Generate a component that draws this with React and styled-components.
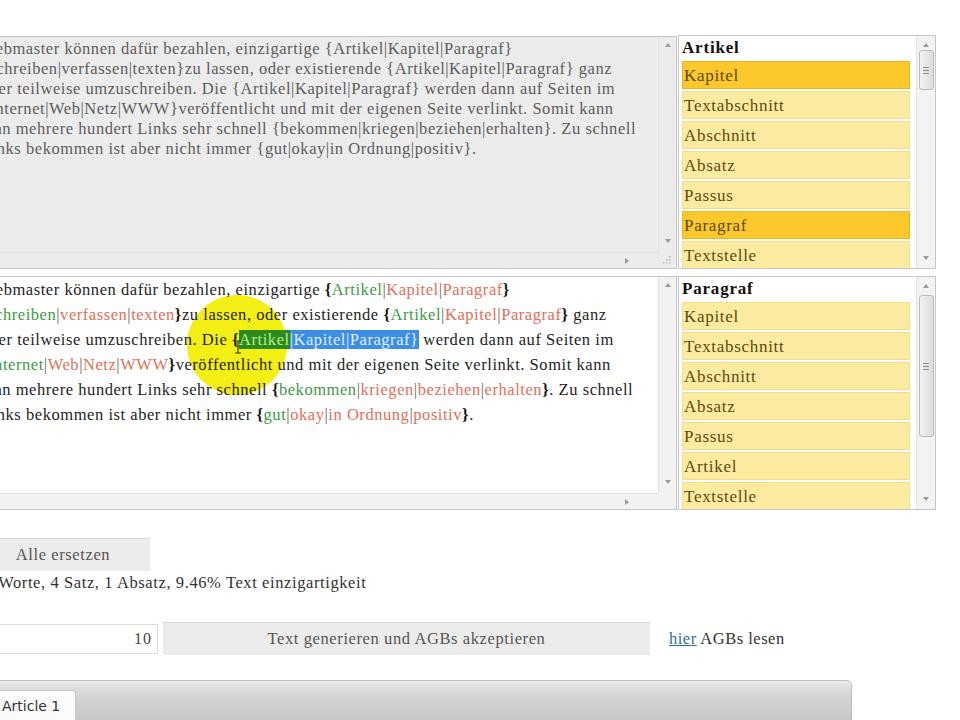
import React from "react"
import styled, { createGlobalStyle } from "styled-components"

const GlobalStyle = createGlobalStyle`
  html, body {
    margin: 0;
    padding: 0;
    background: #fff;
    overflow: hidden;
  }
  body {
    font-family: "Liberation Serif", "DejaVu Serif", serif;
    letter-spacing: 0.55px;
  }
`

const Page = styled.div`
  width: 984px;
  margin-left: -24px;
  padding-top: 36px;
  display: flex;
  flex-direction: column;
`

const Row = styled.div`
  display: flex;
  gap: 1px;
  height: ${p => p.$h}px;
  margin-bottom: ${p => p.$mb || 0}px;
`

const Editor = styled.div`
  width: 701px;
  box-sizing: border-box;
  border: 1px solid #c6c6c6;
  background: ${p => p.$bg};
  display: grid;
  grid-template-columns: 1fr 18px;
  grid-template-rows: 1fr 16px;
  overflow: hidden;
`

const Content = styled.div`
  position: relative;
  overflow: hidden;
  padding: ${p => p.$pt || 0}px 0 0 4px;
  font-size: 16.5px;
  line-height: ${p => p.$lh}px;
  color: ${p => p.$color};
`

const Line = styled.div`
  position: relative;
  z-index: 1;
  white-space: nowrap;
`

const VBar = styled.div`
  display: flex;
  flex-direction: column;
  justify-content: space-between;
  align-items: center;
  padding: 5px 0 8px;
  background: ${p => p.$bg};
  border-left: 1px solid #e2e2e2;
`

const HBar = styled.div`
  display: flex;
  justify-content: flex-end;
  align-items: center;
  padding-right: 26px;
  background: ${p => p.$bg};
  border-top: 1px solid #e2e2e2;
`

const Corner = styled.div`
  background: ${p => p.$bg};
  display: flex;
  align-items: flex-end;
  justify-content: flex-end;
  padding: 0 4px 3px 0;
`

const Arrow = ({ dir }) => {
  const pts = {
    up: "1,5 4,1 7,5",
    down: "1,1 4,5 7,1",
    right: "1,1 5,4 1,7",
  }[dir]
  return (
    <svg width="8" height={dir === "right" ? 8 : 6} viewBox={dir === "right" ? "0 0 8 8" : "0 0 8 6"}>
      <polygon points={pts} fill="#9a9a9a" />
    </svg>
  )
}

const Grip = () => (
  <svg width="10" height="10" viewBox="0 0 10 10">
    {[[8, 2], [8, 5], [5, 5], [8, 8], [5, 8], [2, 8]].map(([x, y], i) => (
      <rect key={i} x={x - 1} y={y - 1} width="1.5" height="1.5" fill="#b8b8b8" />
    ))}
  </svg>
)

const Brace = styled.span`
  color: #151515;
  font-weight: bold;
`

const Opt = styled.span`
  color: ${p => (p.$first ? "#3f9a45" : "#e46f58")};
`

const Pipe = styled.span`
  color: #6a6a6a;
`

const Hi = styled.span`
  background: ${p => (p.$green ? "#2c8a1c" : "#3a8ee4")};
  color: ${p => (p.$green ? "#b6ef8c" : "#e2eeff")};
`

const Circle = styled.div`
  position: absolute;
  left: 210px;
  top: 18px;
  width: 100px;
  height: 100px;
  border-radius: 50%;
  background: #f3ee14;
  z-index: 0;
`

const Cursor = styled.svg`
  position: absolute;
  left: 257px;
  top: 63px;
  z-index: 2;
`

function Spin({ words }) {
  return (
    <>
      <Brace>{"{"}</Brace>
      {words.map((w, i) => (
        <React.Fragment key={i}>
          {i > 0 && <Pipe>|</Pipe>}
          <Opt $first={i === 0}>{w}</Opt>
        </React.Fragment>
      ))}
      <Brace>{"}"}</Brace>
    </>
  )
}

const ListBox = styled.div`
  width: 258px;
  box-sizing: border-box;
  border: 1px solid #c6c6c6;
  background: #fff;
  display: flex;
  overflow: hidden;
  margin-top: ${p => p.$mt || 0}px;
`

const ListBody = styled.div`
  flex: 1;
  padding: 0 6px 0 3px;
  overflow: hidden;
`

const ListHead = styled.div`
  height: 25px;
  line-height: 24px;
  font-size: 17px;
  letter-spacing: 0.8px;
  font-weight: bold;
  color: #111;
  padding-left: 0;
`

const Item = styled.div`
  height: 28px;
  box-sizing: border-box;
  line-height: 27px;
  margin-bottom: 2px;
  padding-left: 1px;
  font-size: 17px;
  letter-spacing: 0.7px;
  color: #5b4a12;
  background: ${p => (p.$sel ? "#fdc82c" : "#fdeb9f")};
  border: 1px solid ${p => (p.$sel ? "#eeb41c" : "#f3dd8c")};
`

const ListScroll = styled.div`
  width: 18px;
  display: flex;
  flex-direction: column;
  align-items: center;
  padding: 6px 0 7px;
  background: #f3f3f3;
  border-left: 1px solid #e4e4e4;
`

const Thumb = styled.div`
  width: 15px;
  box-sizing: border-box;
  height: ${p => p.$h}px;
  margin-top: ${p => p.$top}px;
  border: 1px solid #bcbcbc;
  border-radius: 3px;
  background: linear-gradient(to right, #f2f2f2, #dcdcdc);
  display: flex;
  flex-direction: column;
  justify-content: center;
  align-items: center;
  gap: 2px;
`

const ThumbLine = styled.span`
  width: 6px;
  height: 1px;
  background: #8c8c8c;
`

const Spacer = styled.div`
  flex: 1;
`

function List({ title, items, selected = [], thumbTop, thumbH, mt }) {
  return (
    <ListBox $mt={mt}>
      <ListBody>
        <ListHead>{title}</ListHead>
        {items.map(it => (
          <Item key={it} $sel={selected.includes(it)}>
            {it}
          </Item>
        ))}
      </ListBody>
      <ListScroll>
        <Arrow dir="up" />
        <Thumb $top={thumbTop} $h={thumbH}>
          <ThumbLine />
          <ThumbLine />
          <ThumbLine />
        </Thumb>
        <Spacer />
        <Arrow dir="down" />
      </ListScroll>
    </ListBox>
  )
}

const GrayButton = styled.div`
  width: ${p => p.$w}px;
  height: 33px;
  box-sizing: border-box;
  background: #ececec;
  border-top: 1px solid #d6d6d6;
  color: #555;
  font-size: 16.5px;
  letter-spacing: 0.6px;
  line-height: 31px;
  text-align: center;
  margin-left: ${p => p.$ml || 0}px;
`

const Gap = styled.div`
  height: ${p => p.$h}px;
`

const Stats = styled.div`
  margin-top: 2px;
  padding-left: 0;
  font-size: 16.5px;
  letter-spacing: 0.6px;
  line-height: 20px;
  color: #333;
  white-space: nowrap;
`

const FormRow = styled.div`
  display: flex;
  align-items: center;
  margin-top: 30px;
  height: 31px;
`

const NumInput = styled.div`
  width: 182px;
  height: 30px;
  box-sizing: border-box;
  border: 1px solid #dcdcdc;
  text-align: right;
  padding-right: 5px;
  line-height: 28px;
  font-size: 16px;
  letter-spacing: 1px;
  color: #444;
`

const LinkText = styled.div`
  margin-left: 19px;
  font-size: 16.5px;
  letter-spacing: 0.5px;
  color: #333;
  a {
    color: #2f6ea8;
    text-decoration: underline;
  }
`

const TabBar = styled.div`
  width: 876px;
  height: 60px;
  box-sizing: border-box;
  margin-top: 26px;
  border: 1px solid #bdbdbd;
  border-radius: 0 5px 0 0;
  background: linear-gradient(#eeeeee 0, #e4e4e4 3px, #d8d8d8 12px, #c6c6c6 40px);
  padding-top: 9px;
  display: flex;
`

const Tab = styled.div`
  height: 40px;
  box-sizing: border-box;
  background: #fbfbfb;
  border: 1px solid #c8c8c8;
  border-bottom: none;
  border-radius: 4px 4px 0 0;
  padding: 0 15px 0 24px;
  font-family: "DejaVu Sans", Verdana, sans-serif;
  font-size: 14px;
  letter-spacing: 0;
  line-height: 30px;
  color: #333;
`

const synonymsA = ["Kapitel", "Textabschnitt", "Abschnitt", "Absatz", "Passus", "Paragraf", "Textstelle"]
const synonymsB = ["Kapitel", "Textabschnitt", "Abschnitt", "Absatz", "Passus", "Artikel", "Textstelle"]

export default function App() {
  return (
    <>
      <GlobalStyle />
      <Page>
        <Row $h={233} $mb={7}>
          <Editor $bg="#ececec">
            <Content $lh={20} $pt={2} $color="#5c5c5c">
              <Line>Webmaster können dafür bezahlen, einzigartige {"{Artikel|Kapitel|Paragraf}"}</Line>
              <Line>{"{schreiben|verfassen|texten}"}zu lassen, oder existierende {"{Artikel|Kapitel|Paragraf}"} ganz</Line>
              <Line>oder teilweise umzuschreiben. Die {"{Artikel|Kapitel|Paragraf}"} werden dann auf Seiten im</Line>
              <Line>{"{Internet|Web|Netz|WWW}"}veröffentlicht und mit der eigenen Seite verlinkt. Somit kann</Line>
              <Line>man mehrere hundert Links sehr schnell {"{bekommen|kriegen|beziehen|erhalten}"}. Zu schnell</Line>
              <Line>Links bekommen ist aber nicht immer {"{gut|okay|in Ordnung|positiv}"}.</Line>
            </Content>
            <VBar $bg="#ececec">
              <Arrow dir="up" />
              <Arrow dir="down" />
            </VBar>
            <HBar $bg="#ececec">
              <Arrow dir="right" />
            </HBar>
            <Corner $bg="#ececec">
              <Grip />
            </Corner>
          </Editor>
          <List title="Artikel" items={synonymsA} selected={["Kapitel", "Paragraf"]} thumbTop={2} thumbH={40} mt={-1} />
        </Row>
        <Row $h={234}>
          <Editor $bg="#fff">
            <Content $lh={25} $color="#1e1e1e">
              <Circle />
              <Cursor width="8" height="14" viewBox="0 0 8 14">
                <path d="M1 1h6M4 1v12M1 13h6" stroke="#333" strokeWidth="1.2" fill="none" />
              </Cursor>
              <Line>
                Webmaster können dafür bezahlen, einzigartige <Spin words={["Artikel", "Kapitel", "Paragraf"]} />
              </Line>
              <Line>
                <Spin words={["schreiben", "verfassen", "texten"]} />zu lassen, oder existierende{" "}
                <Spin words={["Artikel", "Kapitel", "Paragraf"]} /> ganz
              </Line>
              <Line>
                oder teilweise umzuschreiben. Die <Brace>{"{"}</Brace>
                <Hi $green>Artikel</Hi>
                <Hi>|Kapitel|Paragraf{"}"}</Hi> werden dann auf Seiten im
              </Line>
              <Line>
                <Spin words={["Internet", "Web", "Netz", "WWW"]} />veröffentlicht und mit der eigenen Seite verlinkt. Somit kann
              </Line>
              <Line>
                man mehrere hundert Links sehr schnell <Spin words={["bekommen", "kriegen", "beziehen", "erhalten"]} />. Zu schnell
              </Line>
              <Line>
                Links bekommen ist aber nicht immer <Spin words={["gut", "okay", "in Ordnung", "positiv"]} />.
              </Line>
            </Content>
            <VBar $bg="#f2f2f2">
              <Arrow dir="up" />
              <Arrow dir="down" />
            </VBar>
            <HBar $bg="#f2f2f2">
              <Arrow dir="right" />
            </HBar>
            <Corner $bg="#f2f2f2" />
          </Editor>
          <List title="Paragraf" items={synonymsB} thumbTop={6} thumbH={142} />
        </Row>

        <Gap $h={28} />
        <GrayButton $w={174}>Alle ersetzen</GrayButton>
        <Stats>66 Worte, 4 Satz, 1 Absatz, 9.46% Text einzigartigkeit</Stats>
        <FormRow>
          <NumInput>10</NumInput>
          <GrayButton $w={487} $ml={5}>
            Text generieren und AGBs akzeptieren
          </GrayButton>
          <LinkText>
            <a>hier</a> AGBs lesen
          </LinkText>
        </FormRow>
        <TabBar>
          <Tab>Article 1</Tab>
        </TabBar>
      </Page>
    </>
  )
}
